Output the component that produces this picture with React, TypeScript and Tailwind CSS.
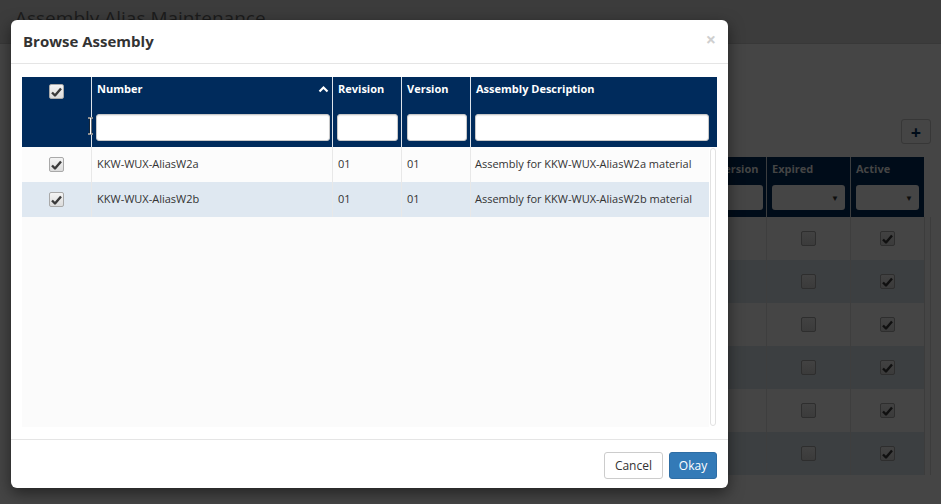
import React from 'react'

type Row = { number: string; revision: string; version: string; description: string; selected: boolean }

const rows: Row[] = [
  { number: 'KKW-WUX-AliasW2a', revision: '01', version: '01', description: 'Assembly for KKW-WUX-AliasW2a material', selected: false },
  { number: 'KKW-WUX-AliasW2b', revision: '01', version: '01', description: 'Assembly for KKW-WUX-AliasW2b material', selected: true },
]

function CheckBox({ checked = true, dim = false }: { checked?: boolean; dim?: boolean }) {
  const box = dim
    ? 'border-[#2e2e2e] bg-gradient-to-b from-[#424242] to-[#3b3b3b]'
    : 'border-[#a9a9a9] bg-gradient-to-b from-[#f4f4f4] to-[#dcdcdc]'
  return (
    <div className={`w-[15px] h-[15px] rounded-[2px] border flex items-center justify-center ${box}`}>
      {checked && (
        <svg width="11" height="10" viewBox="0 0 11 10">
          <path d="M1 5.5 L4 8.5 L10 1.5" fill="none" stroke={dim ? '#101010' : '#3a3a3a'} strokeWidth="2.4" strokeLinejoin="round" />
        </svg>
      )}
    </div>
  )
}

function FilterInput() {
  return <div className="h-[27px] w-full rounded-[3px] border border-[#c8c8c8] bg-white shadow-[inset_0_1px_1px_#00000014]" />
}

// the maintenance screen behind the dialog, already dimmed by the backdrop
function BackgroundPage() {
  const bgRows = [0, 1, 2, 3, 4, 5]
  return (
    <div className="w-full h-full bg-[#454545]">
      <div className="h-[44px] bg-[#3c3c3c] border-b border-[#383838] pl-[15px] pt-[6px]">
        <div className="text-[19px] leading-[24px] text-[#1c1c1c]">Assembly Alias Maintenance</div>
      </div>
      <div className="pl-[22px] pr-[10px] pt-[75px]">
        <div className="flex justify-end">
          <div className="w-[30px] h-[25px] rounded-[3px] border border-[#373737] bg-[#454545] flex items-center justify-center text-[18px] font-bold leading-none text-[#000c19]">
            +
          </div>
        </div>
        <div className="mt-[13px] flex">
          <div className="flex-1">
            <div className="h-[60px] bg-[#000c19] flex">
              <div className="flex-1" />
              <div className="w-[55px] pl-[6px] pr-[3px] pt-[4px] flex flex-col justify-between pb-[7px]">
                <span className="text-[11px] font-bold text-[#454545]">Version</span>
                <div className="h-[25px] rounded-[3px] bg-[#454545]" />
              </div>
              <div className="w-[84px] border-l border-[#3b3d3f] pl-[5px] pr-[5px] pt-[4px] flex flex-col justify-between pb-[7px]">
                <span className="text-[11px] font-bold text-[#454545]">Expired</span>
                <div className="h-[25px] rounded-[3px] bg-[#454545] flex items-center justify-end pr-[6px] text-[8px] text-[#0e0e0e]">▼</div>
              </div>
              <div className="w-[74px] border-l border-[#3b3d3f] pl-[5px] pr-[5px] pt-[4px] flex flex-col justify-between pb-[7px]">
                <span className="text-[11px] font-bold text-[#454545]">Active</span>
                <div className="h-[25px] rounded-[3px] bg-[#454545] flex items-center justify-end pr-[6px] text-[8px] text-[#0e0e0e]">▼</div>
              </div>
            </div>
            {bgRows.map((r) => (
              <div key={r} className={`h-[43px] flex ${r % 2 === 1 ? 'bg-[#3c3f41]' : 'bg-[#454545]'}`}>
                <div className="flex-1" />
                <div className="w-[55px] pl-[6px] flex items-center text-[11px] text-[#0e0e0e]">01</div>
                <div className="w-[84px] border-l border-[#3e3e3e] flex items-center justify-center">
                  <CheckBox checked={false} dim />
                </div>
                <div className="w-[74px] border-l border-[#3e3e3e] flex items-center justify-center">
                  <CheckBox dim />
                </div>
              </div>
            ))}
          </div>
          <div className="w-[7px] border-l border-r border-[#3c3c3c] mt-[60px]" />
        </div>
      </div>
    </div>
  )
}

export default function App() {
  return (
    <div className="relative w-[941px] h-[504px] overflow-hidden font-['Open_Sans',sans-serif]">
      <BackgroundPage />

      <div className="absolute left-[11px] top-[20px] w-[717px] h-[468px] bg-white rounded-[6px] shadow-[0_5px_15px_#00000080] flex flex-col">
        <div className="h-[44px] border-b border-[#e5e5e5] pl-[12px] pr-[12px] flex items-center justify-between">
          <h4 className="text-[15px] font-bold text-[#333]">Browse Assembly</h4>
          <span className="text-[18px] font-bold leading-none text-[#cfcfcf] -mt-[6px]">×</span>
        </div>

        <div className="pt-[13px] pl-[11px] pr-[11px] pb-[12px]">
          {/* grid header */}
          <div className="h-[70px] bg-[#002b5c] flex">
            <div className="w-[69px] flex justify-center pt-[7px]">
              <CheckBox />
            </div>
            <div className="relative w-[241px] border-l border-[#dde3ea] pl-[4px] pr-[2px] pt-[4px] pb-[6px] flex flex-col justify-between">
              <div className="flex items-center justify-between pl-[1px] pr-[1px]">
                <span className="text-[11px] font-bold text-white">Number</span>
                <svg width="11" height="8" viewBox="0 0 11 8">
                  <path d="M1.5 6.5 L5.5 2.5 L9.5 6.5" fill="none" stroke="white" strokeWidth="2.2" />
                </svg>
              </div>
              <FilterInput />
              <svg className="absolute left-[-5px] top-[40px]" width="7" height="18" viewBox="0 0 7 18">
                <path d="M1 1 H6 M3.5 1 V17 M1 17 H6" fill="none" stroke="#222" strokeWidth="2.2" />
                <path d="M1 1 H6 M3.5 1 V17 M1 17 H6" fill="none" stroke="white" strokeWidth="1" />
              </svg>
            </div>
            <div className="w-[69px] border-l border-[#dde3ea] pl-[4px] pr-[3px] pt-[4px] pb-[6px] flex flex-col justify-between">
              <span className="text-[11px] font-bold text-white pl-[1px]">Revision</span>
              <FilterInput />
            </div>
            <div className="w-[69px] border-l border-[#dde3ea] pl-[5px] pr-[3px] pt-[4px] pb-[6px] flex flex-col justify-between">
              <span className="text-[11px] font-bold text-white">Version</span>
              <FilterInput />
            </div>
            <div className="flex-1 border-l border-[#dde3ea] pl-[4px] pr-[8px] pt-[4px] pb-[6px] flex flex-col justify-between">
              <span className="text-[11px] font-bold text-white pl-[1px]">Assembly Description</span>
              <FilterInput />
            </div>
          </div>

          {/* grid body */}
          <div className="h-[280px] flex">
            <div className="flex-1 bg-[#fbfbfb]">
              {rows.map((r) => (
                <div key={r.number} className={`h-[35px] flex text-[11px] text-[#333] ${r.selected ? 'bg-[#dfe8f1]' : 'bg-[#fcfcfc]'}`}>
                  <div className="w-[69px] flex items-center justify-center">
                    <CheckBox />
                  </div>
                  <div className="w-[241px] border-l border-[#e8e8e8] pl-[5px] flex items-center">{r.number}</div>
                  <div className="w-[69px] border-l border-[#e8e8e8] pl-[5px] flex items-center">{r.revision}</div>
                  <div className="w-[69px] border-l border-[#e8e8e8] pl-[5px] flex items-center">{r.version}</div>
                  <div className="flex-1 border-l border-[#e8e8e8] pl-[4px] flex items-center">{r.description}</div>
                </div>
              ))}
            </div>
            <div className="w-[8px] bg-white pl-[1px] pr-[1px] pt-[1px]">
              <div className="h-[278px] rounded-[3px] border border-[#e2e2e2]" />
            </div>
          </div>
        </div>

        <div className="flex-1 border-t border-[#e5e5e5] pt-[12px] pr-[11px] flex justify-end gap-[6px]">
          <button className="h-[27px] px-[10px] rounded-[3px] border border-[#ccc] bg-white text-[12px] text-[#333]">Cancel</button>
          <button className="h-[27px] w-[48px] rounded-[3px] border border-[#2e6da4] bg-[#337ab7] text-[12px] text-white">Okay</button>
        </div>
      </div>
    </div>
  )
}
